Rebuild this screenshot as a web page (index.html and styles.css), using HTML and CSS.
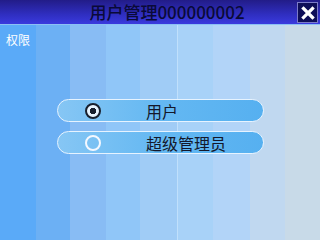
FILE: index.html
```html
<html lang="zh-CN"><head>
  <meta charset="UTF-8">
  <meta name="viewport" content="width=device-width, initial-scale=1.0">
  <title>用户管理</title>
  <link rel="stylesheet" href="styles.css">
</head>
<body>
  <div class="titlebar">
    <div class="title">用户管理000000002</div>
    <div class="close-btn">
      <svg width="14" height="14" viewBox="0 0 14 14">
        <path d="M2.5 2.5 L11.5 11.5 M11.5 2.5 L2.5 11.5" stroke="#fff" stroke-width="3.2" stroke-linecap="square"></path>
      </svg>
    </div>
  </div>

  <div class="content">
    <div class="section-label">权限</div>

    <div class="options">
      <div class="option">
        <span class="radio checked"></span>
        <span class="option-text">用户</span>
      </div>
      <div class="option">
        <span class="radio"></span>
        <span class="option-text">超级管理员</span>
      </div>
    </div>
  </div>
</body></html>
```

FILE: styles.css
```css
body {
  margin: 0;
  width: 320px;
  height: 240px;
  overflow: hidden;
  font-family: "Noto Sans CJK SC", "Noto Sans", sans-serif;
  display: flex;
  flex-direction: column;
}

.titlebar {
  height: 24px;
  background: linear-gradient(to bottom, #221c88, #2f2ec0 60%, #3a3ade);
  border-bottom: 1px solid #8cc0f4;
  display: flex;
  align-items: center;
  justify-content: center;
  padding-left: 14px;
  position: relative;
}

.title {
  font-size: 17px;
  font-weight: 500;
  color: #0a0a38;
  line-height: 24px;
}

.close-btn {
  position: absolute;
  right: 2px;
  top: 2px;
  width: 19px;
  height: 19px;
  background: #0e0e58;
  border: 1px solid #7c7cc8;
  display: flex;
  align-items: center;
  justify-content: center;
}

.content {
  flex: 1;
  background: linear-gradient(to right,
    #5aaaf8 0, #5aaaf8 36px,
    #6cb0f4 36px, #6cb0f4 70px,
    #88bcf4 70px, #88bcf4 106px,
    #90c6f8 106px, #90c6f8 140px,
    #a0ccf6 140px, #a0ccf6 177px,
    #c0e0fc 177px, #c0e0fc 178px,
    #a8d2f8 178px, #a8d2f8 213px,
    #b2d4f8 213px, #b2d4f8 250px,
    #c0d8f0 250px, #c0d8f0 285px,
    #c8dae8 285px, #c8dae8 320px);
  display: flex;
  flex-direction: column;
}

.section-label {
  font-size: 12px;
  color: #ffffff;
  padding: 7px 0 0 6px;
  line-height: 16px;
}

.options {
  margin: 51px 0 0 57px;
  width: 207px;
  display: flex;
  flex-direction: column;
  gap: 9px;
}

.option {
  height: 21px;
  border: 1.5px solid #e6f3ff;
  border-radius: 12px;
  background: linear-gradient(to right, #86c6f4, #64b8f2 50%, #56b0f0);
  display: flex;
  align-items: center;
  padding-left: 27px;
}

.radio {
  width: 12px;
  height: 12px;
  border-radius: 50%;
  border: 2px solid #f4f8ff;
  box-sizing: content-box;
}

.radio.checked {
  border-color: #18202e;
  background: radial-gradient(circle, #18202e 0, #18202e 3px, #e8f4ff 3.5px);
}

.option-text {
  margin-left: 45px;
  font-size: 16px;
  color: #14182a;
  line-height: 20px;
}
```
